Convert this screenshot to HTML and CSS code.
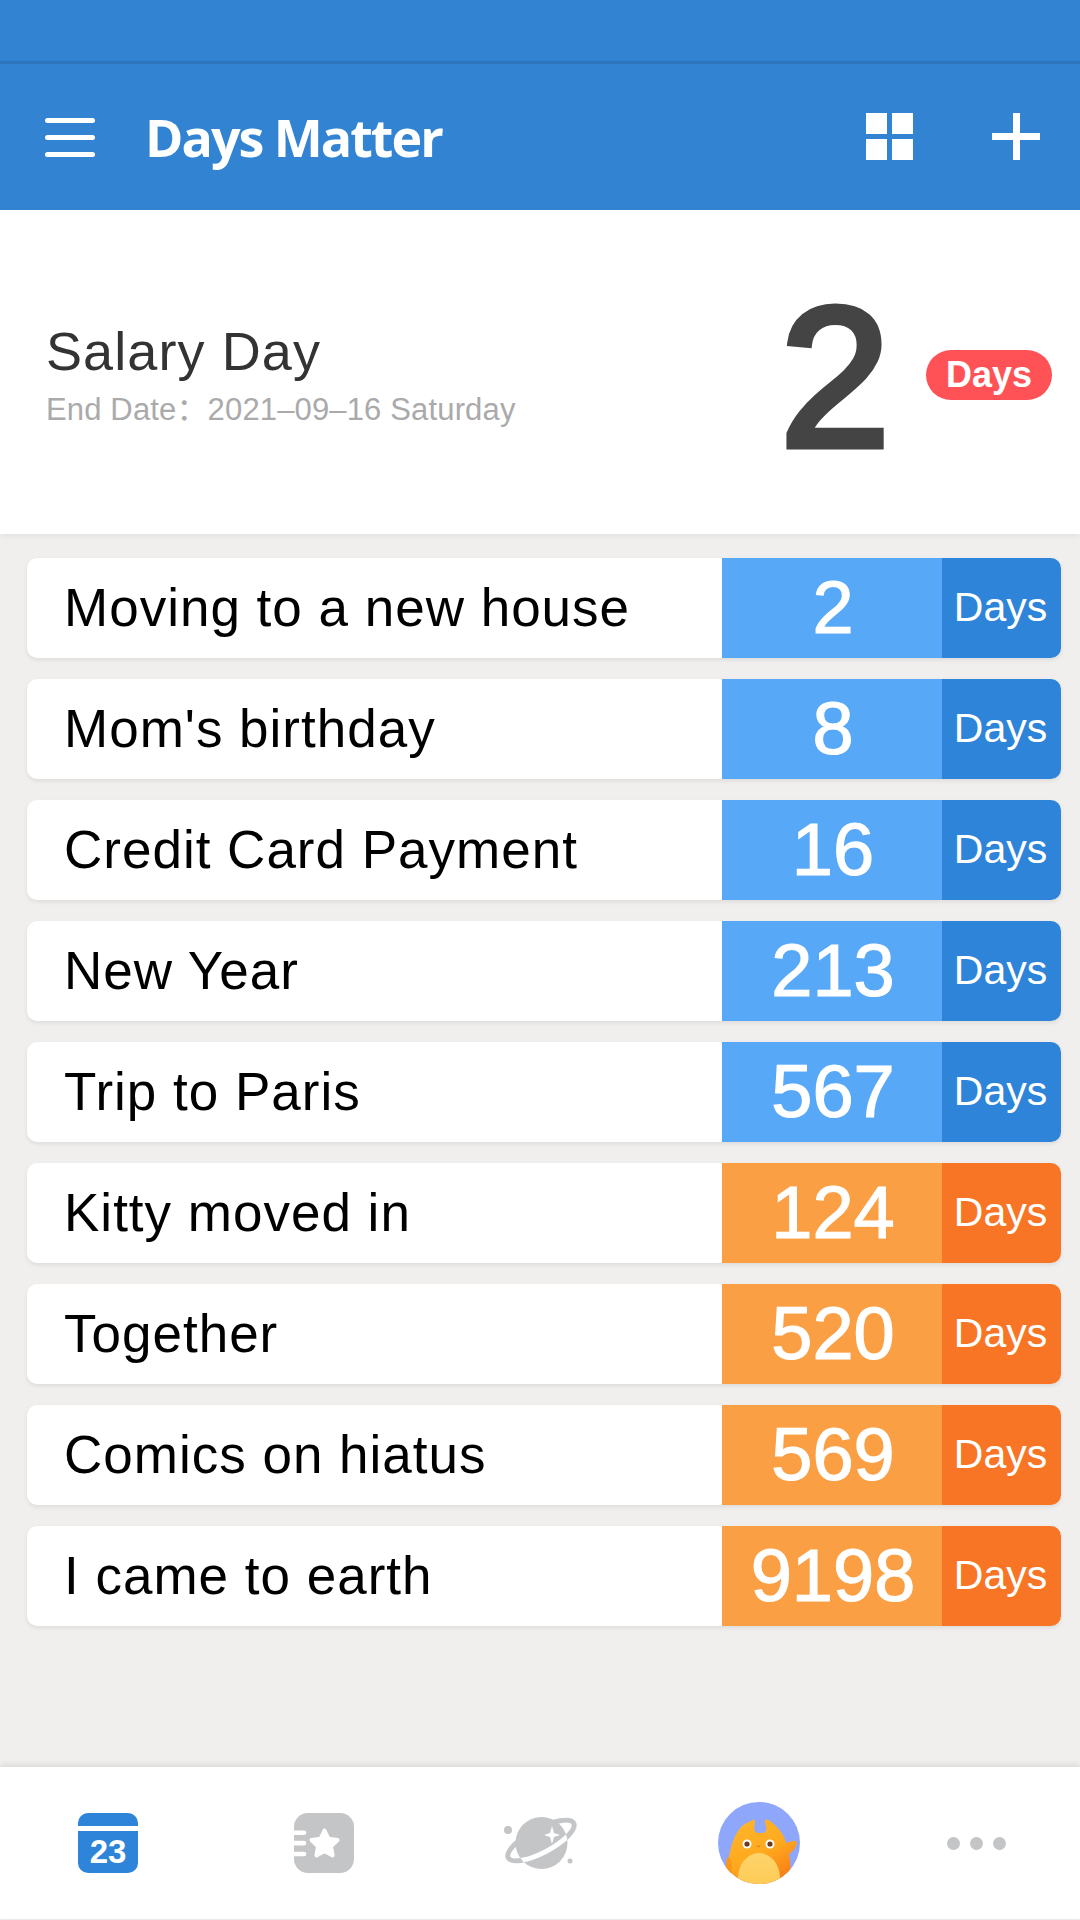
FILE: index.html
```html
<!DOCTYPE html>
<html lang="en">
<head>
<meta charset="utf-8">
<title>Days Matter</title>
<link rel="stylesheet" href="styles.css">
</head>
<body>
<div class="page">
  <div class="statusbar"></div>
  <header class="topbar">
    <div class="hamburger"><span></span><span></span><span></span></div>
    <h1 class="app-title">Days Matter</h1>
    <div class="grid-icon"><span></span><span></span><span></span><span></span></div>
    <div class="plus-icon"></div>
  </header>
  <section class="hero">
    <div class="hero-text">
      <div class="hero-title">Salary Day</div>
      <div class="hero-date">End Date：2021–09–16 Saturday</div>
    </div>
    <div class="hero-num">2</div>
    <div class="hero-pill">Days</div>
  </section>
  <main class="list">
    <div class="row blue"><div class="row-name">Moving to a new house</div><div class="row-num">2</div><div class="row-unit">Days</div></div>
    <div class="row blue"><div class="row-name">Mom's birthday</div><div class="row-num">8</div><div class="row-unit">Days</div></div>
    <div class="row blue"><div class="row-name">Credit Card Payment</div><div class="row-num">16</div><div class="row-unit">Days</div></div>
    <div class="row blue"><div class="row-name">New Year</div><div class="row-num">213</div><div class="row-unit">Days</div></div>
    <div class="row blue"><div class="row-name">Trip to Paris</div><div class="row-num">567</div><div class="row-unit">Days</div></div>
    <div class="row orange"><div class="row-name">Kitty moved in</div><div class="row-num">124</div><div class="row-unit">Days</div></div>
    <div class="row orange"><div class="row-name">Together</div><div class="row-num">520</div><div class="row-unit">Days</div></div>
    <div class="row orange"><div class="row-name">Comics on hiatus</div><div class="row-num">569</div><div class="row-unit">Days</div></div>
    <div class="row orange"><div class="row-name">I came to earth</div><div class="row-num">9198</div><div class="row-unit">Days</div></div>
  </main>
  <nav class="tabbar">
    <div class="tab">
      <svg width="60" height="60" viewBox="0 0 60 60">
        <path class="ic-blue" d="M0 13V10A10 10 0 0 1 10 0H50A10 10 0 0 1 60 10V13Z"/>
        <path class="ic-blue" d="M0 18H60V50A10 10 0 0 1 50 60H10A10 10 0 0 1 0 50Z"/>
        <text class="cal-num" x="30" y="50" text-anchor="middle">23</text>
      </svg>
    </div>
    <div class="tab">
      <svg width="60" height="60" viewBox="0 0 60 60">
        <rect class="ic-grey" width="60" height="60" rx="14"/>
        <path class="ic-white" d="M0 17.500H10A2.300 2.300 0 0 1 10 22.100H0ZM0 27.800H10A2.300 2.300 0 0 1 10 32.400H0ZM0 38.700H10A2.300 2.300 0 0 1 10 43.300H0Z"/>
        <path class="ic-star" d="M30.500 17.500L34.500 25.800L43.500 27L37 33.400L38.600 42.400L30.500 38L22.400 42.400L24 33.400L17.500 27L26.500 25.800Z"/>
      </svg>
    </div>
    <div class="tab">
      <svg width="80" height="56" viewBox="0 0 80 56">
        <defs>
          <clipPath id="planetClip"><circle cx="41.500" cy="28" r="26"/></clipPath>
        </defs>
        <ellipse class="ring-back" cx="41" cy="25.500" rx="37" ry="12" transform="rotate(-28 41 25.500)"/>
        <circle class="ic-grey" cx="41.500" cy="28" r="26"/>
        <g clip-path="url(#planetClip)">
          <path class="ring-gap" d="M-37 0A37 12 0 0 0 37 0" transform="translate(41 25.500) rotate(-28)"/>
        </g>
        <path class="ic-white" d="M52 11L54 18L60 20L54 22L52 29L50 22L44 20L50 18Z"/>
        <circle class="ic-grey" cx="8" cy="15" r="4"/>
        <circle class="ic-grey" cx="70" cy="46" r="2.500"/>
      </svg>
    </div>
    <div class="tab tab-avatar">
      <svg width="82" height="82" viewBox="0 0 82 82">
        <defs>
          <clipPath id="avatarClip"><circle cx="41" cy="41" r="41"/></clipPath>
          <linearGradient id="catBody" x1="0" y1="0" x2="0.6" y2="1">
            <stop offset="0" stop-color="#ffb82a"/>
            <stop offset="0.6" stop-color="#ffa91f"/>
            <stop offset="1" stop-color="#f98015"/>
          </linearGradient>
          <linearGradient id="catBelly" x1="0" y1="0" x2="0" y2="1">
            <stop offset="0" stop-color="#fdd36a"/>
            <stop offset="1" stop-color="#ffc84a"/>
          </linearGradient>
        </defs>
        <g clip-path="url(#avatarClip)">
          <rect class="av-bg" width="82" height="82"/>
          <path fill="url(#catBody)" d="M35 18C36 16 37 18 37 20C36 25 35 30 40 31H45C50 30 48 25 47 20C47 17 49 17 52 19C60 25 66 32 68 41L75 39C78 38 80 41 78 44C76 48 74 50 71 52C73 62 73 74 72 82H7C7 72 9 60 12 50C14 40 18 30 24 24C28 21 33 19 35 18Z"/>
          <path class="cat-shade" d="M9 56C13 55 14 60 14 66C14 72 13 78 10 78C7 74 7 64 9 56Z"/>
          <ellipse fill="url(#catBelly)" cx="41" cy="76" rx="21" ry="25"/>
          <circle class="ic-white" cx="29" cy="42" r="4.500"/>
          <circle class="ic-white" cx="52" cy="42" r="4.500"/>
          <circle class="cat-eye" cx="29" cy="42" r="2.600"/>
          <circle class="cat-eye" cx="52" cy="42" r="2.600"/>
          <path class="cat-mouth" d="M39 43.500L40.500 45L42 43.500"/>
        </g>
      </svg>
    </div>
    <div class="tab dots"><span></span><span></span><span></span></div>
  </nav>
</div>
</body>
</html>
```

FILE: styles.css
```css
* { box-sizing: border-box; }
html, body { margin: 0; padding: 0; }
body {
  width: 1080px;
  height: 1920px;
  overflow: hidden;
  background: #f0efed;
  font-family: "Liberation Sans", "Noto Sans CJK SC", Arial, sans-serif;
}
.page { display: flex; flex-direction: column; height: 1920px; }

.statusbar {
  height: 64px;
  background: #3284d2;
  border-bottom: 3px solid #2d76bd;
  flex: none;
}
.topbar {
  height: 146px;
  flex: none;
  display: flex;
  align-items: center;
  background: #3284d2;
  padding: 0 40px 0 45px;
  color: #fff;
}
.hamburger { width: 50px; display: flex; flex-direction: column; gap: 12px; }
.hamburger span { height: 5px; background: #fff; border-radius: 3px; }
.app-title {
  margin: 0 0 0 50px;
  flex: 1;
  font-family: "Open Sans", sans-serif;
  font-weight: 700;
  font-size: 52px;
  letter-spacing: -2px;
  line-height: 1;
}
.grid-icon {
  width: 47px;
  height: 47px;
  display: grid;
  grid-template-columns: 1fr 1fr;
  grid-template-rows: 1fr 1fr;
  gap: 5px;
  margin-top: -1px;
}
.grid-icon span { background: #fff; }
.plus-icon {
  width: 48px;
  height: 47px;
  margin: -1px 0 0 79px;
  background:
    linear-gradient(#fff, #fff) center / 7px 100% no-repeat,
    linear-gradient(#fff, #fff) center / 100% 7px no-repeat;
}

.hero {
  height: 324px;
  flex: none;
  background: #fff;
  display: flex;
  align-items: center;
  padding: 0 28px 0 46px;
  box-shadow: 0 2px 6px rgba(0, 0, 0, 0.06);
  position: relative;
}
.hero-text { flex: 1; margin-top: 4px; }
.hero-title { font-size: 54px; line-height: 62px; color: #333; letter-spacing: 1.100px; }
.hero-date { font-size: 31px; line-height: 38px; color: #aaa; margin-top: 9px; letter-spacing: 0.150px; }
.hero-num {
  width: 110px;
  text-align: center;
  font-size: 198px;
  line-height: 208px;
  color: #444;
  -webkit-text-stroke: 7px #444;
  margin-top: 12px;
}
.hero-pill {
  width: 126px;
  height: 50px;
  margin: 5px 0 0 36px;
  border-radius: 25px;
  background: #ff5257;
  color: #fff;
  font-weight: 700;
  font-size: 36px;
  line-height: 50px;
  text-align: center;
}

.list {
  flex: 1;
  display: flex;
  flex-direction: column;
  gap: 21px;
  padding: 24px 19px 0 27px;
}
.row {
  height: 100px;
  flex: none;
  display: flex;
  background: #fff;
  border-radius: 10px;
  overflow: hidden;
  box-shadow: 0 2px 4px rgba(0, 0, 0, 0.08);
}
.row-name {
  flex: 1;
  padding-left: 37px;
  font-size: 53px;
  line-height: 100px;
  letter-spacing: 1px;
  color: #000;
}
.row-num {
  width: 220px;
  padding-left: 2px;
  text-align: center;
  font-size: 74px;
  line-height: 100px;
  color: #fff;
  -webkit-text-stroke: 1.200px #fff;
}
.row-unit {
  width: 119px;
  padding-right: 2px;
  text-align: center;
  font-size: 41px;
  line-height: 98px;
  color: #fff;
}
.blue .row-num { background: #58a8f8; }
.blue .row-unit { background: #2e84d8; }
.orange .row-num { background: #fb9f44; }
.orange .row-unit { background: #f77524; }

.tabbar {
  height: 152px;
  flex: none;
  margin-bottom: 1px;
  display: grid;
  grid-template-columns: repeat(5, 1fr);
  background: #fff;
  box-shadow: 0 -2px 6px rgba(0, 0, 0, 0.1);
  position: relative;
}
.tab { display: flex; align-items: center; justify-content: center; }
.tab svg { display: block; }
.tab-avatar { padding-left: 6px; }
.dots { gap: 10px; padding-left: 8px; }
.dots span { width: 13px; height: 13px; border-radius: 50%; background: #c4c5c7; }

.ic-blue { fill: #2e84d8; }
.ic-grey { fill: #c4c5c7; }
.ic-white { fill: #fff; }
.ic-star { fill: #fff; stroke: #fff; stroke-width: 4; stroke-linejoin: round; }
.cal-num { fill: #fff; font-weight: 700; font-size: 33px; font-family: "Liberation Sans", sans-serif; }
.ring-back { fill: none; stroke: #c4c5c7; stroke-width: 5; }
.ring-gap { fill: none; stroke: #fff; stroke-width: 5; }
.av-bg { fill: #8fa7fb; }
.cat-shade { fill: #f9961c; }
.cat-eye { fill: #6b3a1c; }
.cat-mouth { fill: none; stroke: #c9701a; stroke-width: 1; }
```
